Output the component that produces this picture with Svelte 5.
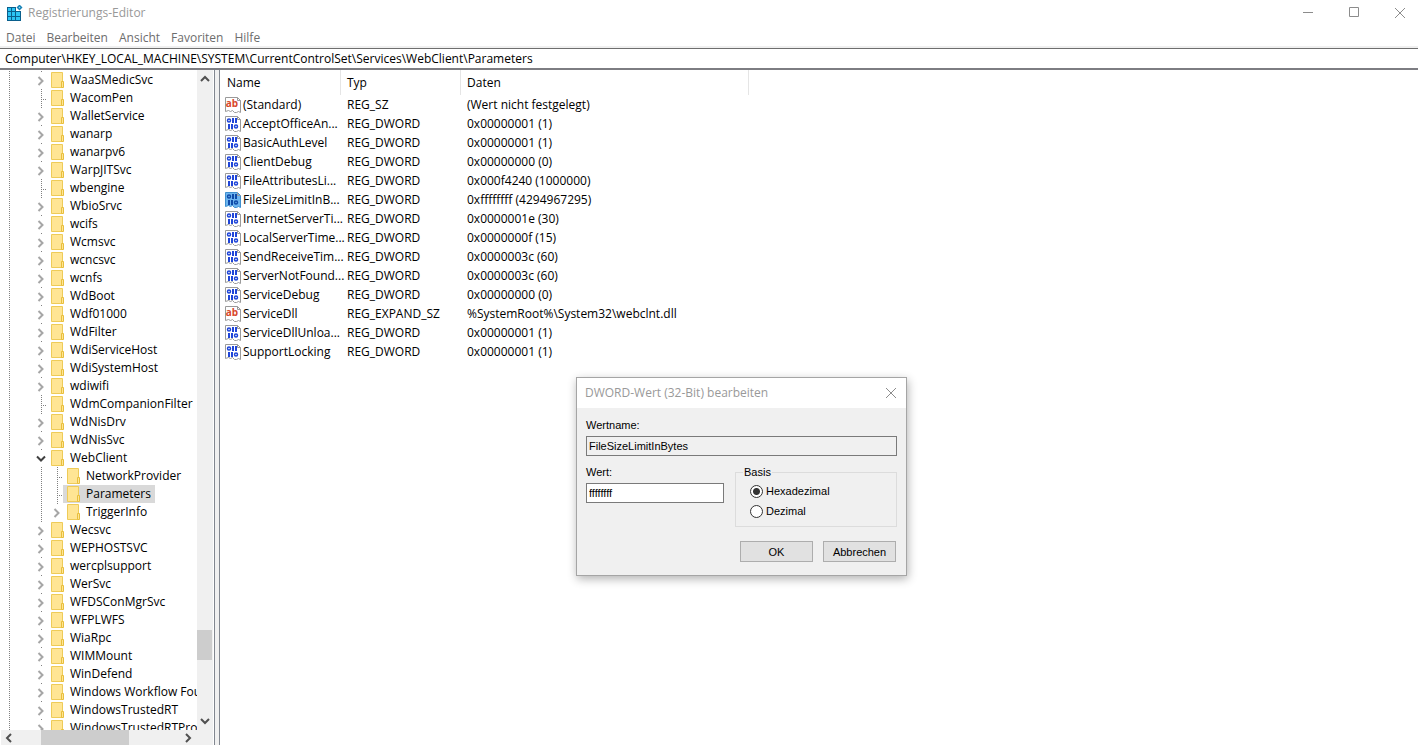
<script lang="ts">
  interface TreeKey {
    name: string;
    depth?: number;
    leaf?: boolean;
    open?: boolean;
  }

  interface RegValue {
    name: string;
    type: string;
    data: string;
  }

  const menu = ["Datei", "Bearbeiten", "Ansicht", "Favoriten", "Hilfe"];

  const keys: TreeKey[] = [
    { name: "WaaSMedicSvc" },
    { name: "WacomPen", leaf: true },
    { name: "WalletService" },
    { name: "wanarp" },
    { name: "wanarpv6" },
    { name: "WarpJITSvc" },
    { name: "wbengine", leaf: true },
    { name: "WbioSrvc" },
    { name: "wcifs" },
    { name: "Wcmsvc" },
    { name: "wcncsvc" },
    { name: "wcnfs" },
    { name: "WdBoot" },
    { name: "Wdf01000" },
    { name: "WdFilter" },
    { name: "WdiServiceHost" },
    { name: "WdiSystemHost" },
    { name: "wdiwifi" },
    { name: "WdmCompanionFilter", leaf: true },
    { name: "WdNisDrv" },
    { name: "WdNisSvc" },
    { name: "WebClient", open: true },
    { name: "NetworkProvider", depth: 1, leaf: true },
    { name: "Parameters", depth: 1, leaf: true },
    { name: "TriggerInfo", depth: 1 },
    { name: "Wecsvc" },
    { name: "WEPHOSTSVC" },
    { name: "wercplsupport" },
    { name: "WerSvc" },
    { name: "WFDSConMgrSvc" },
    { name: "WFPLWFS" },
    { name: "WiaRpc" },
    { name: "WIMMount" },
    { name: "WinDefend" },
    { name: "Windows Workflow Foundation" },
    { name: "WindowsTrustedRT" },
    { name: "WindowsTrustedRTProxy" }
  ];

  const values: RegValue[] = [
    { name: "(Standard)", type: "REG_SZ", data: "(Wert nicht festgelegt)" },
    { name: "AcceptOfficeAn...", type: "REG_DWORD", data: "0x00000001 (1)" },
    { name: "BasicAuthLevel", type: "REG_DWORD", data: "0x00000001 (1)" },
    { name: "ClientDebug", type: "REG_DWORD", data: "0x00000000 (0)" },
    { name: "FileAttributesLi...", type: "REG_DWORD", data: "0x000f4240 (1000000)" },
    { name: "FileSizeLimitInB...", type: "REG_DWORD", data: "0xffffffff (4294967295)" },
    { name: "InternetServerTi...", type: "REG_DWORD", data: "0x0000001e (30)" },
    { name: "LocalServerTime...", type: "REG_DWORD", data: "0x0000000f (15)" },
    { name: "SendReceiveTim...", type: "REG_DWORD", data: "0x0000003c (60)" },
    { name: "ServerNotFound...", type: "REG_DWORD", data: "0x0000003c (60)" },
    { name: "ServiceDebug", type: "REG_DWORD", data: "0x00000000 (0)" },
    { name: "ServiceDll", type: "REG_EXPAND_SZ", data: "%SystemRoot%\\System32\\webclnt.dll" },
    { name: "ServiceDllUnloa...", type: "REG_DWORD", data: "0x00000001 (1)" },
    { name: "SupportLocking", type: "REG_DWORD", data: "0x00000001 (1)" }
  ];

  let selectedKey = $state("Parameters");
  let selectedValue = $state("FileSizeLimitInB...");
  let path = $state("Computer\\HKEY_LOCAL_MACHINE\\SYSTEM\\CurrentControlSet\\Services\\WebClient\\Parameters");
  let dialogOpen = $state(true);
  let value = $state("ffffffff");
  let base = $state("hex");
</script>

{#snippet arrow(d: string)}
  <svg width="16" height="16" viewBox="0 0 16 16" aria-hidden="true">
    <path {d} fill="none" stroke="#505050" stroke-width="2" />
  </svg>
{/snippet}

{#snippet cross()}
  <svg width="12" height="12" viewBox="0 0 12 12" aria-hidden="true">
    <path d="M1 1l10 10M11 1L1 11" fill="none" stroke="#8c8c8c" />
  </svg>
{/snippet}

<div class="window">
  <header class="titlebar">
    <svg width="17" height="17" viewBox="0 0 17 17" aria-hidden="true">
      <path d="M1 2h9v4h5v10H1z" fill="#0a5f8c" />
      <path d="M2 3h3v3H2zM6 3h3v3H6zM2 7h3v4H2zM6 7h3v4H6zM10 7h4v4h-4zM2 12h3v3H2zM6 12h3v3H6zM10 12h4v3h-4z" fill="#2cc4f4" />
      <path d="M13.500-.5l3 3-3 3-3-3z" fill="#1580b4" />
      <path d="M13.500 1.500l1 1-1 1-1-1z" fill="#8fe0fb" />
    </svg>
    <h1>Registrierungs-Editor</h1>
    <div class="caption-buttons">
      <button aria-label="Minimieren">
        <svg width="12" height="12" viewBox="0 0 12 12"><path d="M1 5.500h10" stroke="#8c8c8c" /></svg>
      </button>
      <button aria-label="Maximieren">
        <svg width="12" height="12" viewBox="0 0 12 12"><path d="M1.500.5h9v9h-9z" fill="none" stroke="#8c8c8c" /></svg>
      </button>
      <button aria-label="Schließen">{@render cross()}</button>
    </div>
  </header>

  <nav class="menubar">
    {#each menu as item}
      <button>{item}</button>
    {/each}
  </nav>

  <input class="address" aria-label="Pfad" bind:value={path} spellcheck="false" />

  <main class="panes">
    <section class="tree-pane">
      <ul class="tree">
        {#each keys as key (key.name)}
          <li>
            <span class="cell dotted"></span>
            <span class="cell"></span>
            {#if key.depth}
              <span class="cell dotted"></span>
            {/if}
            <span class="toggle" class:dotted={key.leaf} class:leaf={key.leaf}>
              {#if !key.leaf}
                <svg width="14" height="18" viewBox="0 0 14 18" aria-hidden="true">
                  <path d="M8 0h1v1h-1z" fill="#808080" />
                  {#if key.open}
                    <path d="M4 7.500l4 4 4-4" fill="none" stroke="#404040" stroke-width="2" />
                  {:else}
                    <path d="M5.500 6l4 4-4 4" fill="none" stroke="#a6a6a6" stroke-width="2" />
                  {/if}
                </svg>
              {/if}
            </span>
            <button class="key" class:selected={key.name === selectedKey} onclick={() => (selectedKey = key.name)}>
              <svg width="16" height="18" viewBox="0 0 16 18" aria-hidden="true">
                <path d="M.5 1.500h11v15H.5z" fill="#ffe594" stroke="#eecb58" />
                <path d="M10.500 10.500h2v6h-2z" fill="#ffe594" stroke="#e8bf3d" />
              </svg>
              {key.name}
            </button>
          </li>
        {/each}
      </ul>
      <div class="vscroll">
        <button aria-label="Nach oben">{@render arrow("M4 11l4-4 4 4")}</button>
        <span class="thumb"></span>
        <button aria-label="Nach unten">{@render arrow("M4 5l4 4 4-4")}</button>
      </div>
      <div class="hscroll">
        <button aria-label="Nach links">{@render arrow("M10 4L6 8l4 4")}</button>
        <span class="thumb"></span>
        <button aria-label="Nach rechts">{@render arrow("M6 4l4 4-4 4")}</button>
      </div>
    </section>

    <section class="value-pane">
      <table>
        <thead>
          <tr><th>Name</th><th>Typ</th><th>Daten</th></tr>
        </thead>
        <tbody>
          {#each values as row (row.name)}
            <tr onclick={() => (selectedValue = row.name)}>
              <td>
                <div class="name" class:selected={row.name === selectedValue}>
                  <svg width="16" height="16" viewBox="0 0 16 16" aria-hidden="true">
                    <path
                      class="sheet"
                      d="M.5.5h12l3 3v12l-2-1-2 1h-2l-2-2-2 1-2-1-3 1z"
                    />
                    <path class="fold" d="M12.500.5v3h3" />
                    {#if row.type === "REG_DWORD"}
                      <g class="bits">
                        <circle cx="4" cy="4.500" r="1.500" />
                        <rect x="7" y="2" width="2" height="5" />
                        <rect x="10" y="2" width="2" height="5" />
                        <rect x="3" y="8" width="2" height="5" />
                        <rect x="6" y="8" width="2" height="5" />
                        <circle cx="11" cy="10.500" r="1.500" />
                      </g>
                    {:else}
                      <text class="letters" x="7" y="10">ab</text>
                    {/if}
                  </svg>
                  {row.name}
                </div>
              </td>
              <td>{row.type}</td>
              <td>{row.data}</td>
            </tr>
          {/each}
        </tbody>
      </table>
    </section>
  </main>

  {#if dialogOpen}
    <div class="dialog" role="dialog" aria-labelledby="dialog-title">
      <header>
        <h2 id="dialog-title">DWORD-Wert (32-Bit) bearbeiten</h2>
        <button aria-label="Schließen" onclick={() => (dialogOpen = false)}>{@render cross()}</button>
      </header>
      <form onsubmit={(e) => e.preventDefault()}>
        <label for="value-name">Wertname:</label>
        <input id="value-name" type="text" value="FileSizeLimitInBytes" readonly />
        <div class="columns">
          <div class="data">
            <label for="value-data">Wert:</label>
            <input id="value-data" type="text" bind:value spellcheck="false" />
          </div>
          <fieldset>
            <legend>Basis</legend>
            <label><input type="radio" name="base" value="hex" bind:group={base} />Hexadezimal</label>
            <label><input type="radio" name="base" value="dec" bind:group={base} />Dezimal</label>
          </fieldset>
        </div>
        <div class="actions">
          <button type="submit">OK</button>
          <button type="button" onclick={() => (dialogOpen = false)}>Abbrechen</button>
        </div>
      </form>
    </div>
  {/if}
</div>

<style>
  :global(body) {
    margin: 0;
    background: #fff;
  }

  .window {
    display: flex;
    flex-direction: column;
    height: 100vh;
    overflow: hidden;
    font-family: "Segoe UI", "Open Sans", "Noto Sans", sans-serif;
    font-size: 12px;
    line-height: 18px;
    color: #000;
  }

  .window * {
    box-sizing: border-box;
  }

  svg {
    display: block;
    flex: none;
  }

  button,
  input {
    margin: 0;
    padding: 0;
    border: 0;
    background: none;
    color: inherit;
    font: inherit;
  }

  h1,
  h2 {
    margin: 0;
    font-size: 12px;
    font-weight: 400;
    color: #999;
  }

  /* Title bar and menu */
  .titlebar {
    display: flex;
    align-items: center;
    gap: 5px;
    flex: none;
    height: 26px;
    padding: 0 12px 0 6px;
  }

  .caption-buttons {
    display: flex;
    gap: 34px;
    height: 24px;
    margin-left: auto;
  }

  .menubar {
    display: flex;
    gap: 11px;
    flex: none;
    height: 22px;
    padding: 3px 6px 0;
    border-bottom: 2px solid #f0f0f0;
    color: #6d6d6d;
  }

  .menubar button {
    height: 18px;
  }

  .address {
    flex: none;
    height: 22px;
    padding: 0 5px;
    border-top: 1px solid #6e6e6e;
    border-bottom: 2px solid #7d7d82;
    outline: none;
  }

  .panes {
    display: flex;
    flex: 1;
    min-height: 0;
  }

  /* Key tree */
  .tree-pane {
    display: grid;
    grid-template: minmax(0, 1fr) 15px / minmax(0, 1fr) 16px;
    flex: none;
    width: 215px;
    padding: 0 1px;
    border-right: 1px solid #828790;
  }

  .tree {
    margin: 0;
    padding: 1px 0 0;
    overflow: hidden;
    list-style: none;
  }

  .tree li {
    display: flex;
    height: 18px;
  }

  .cell {
    flex: none;
    width: 16px;
  }

  .toggle {
    flex: none;
    width: 14px;
  }

  .dotted {
    background: repeating-linear-gradient(#808080 0 1px, transparent 1px 2px) 8px 0 / 1px 100% no-repeat;
  }

  .leaf {
    background:
      repeating-linear-gradient(#808080 0 1px, transparent 1px 2px) 8px 0 / 1px 100% no-repeat,
      repeating-linear-gradient(90deg, #808080 0 1px, transparent 1px 2px) 8px 10px / 6px 1px no-repeat;
  }

  .key {
    display: flex;
    gap: 3px;
    padding: 0 4px;
    white-space: nowrap;
  }

  .key.selected {
    background: #d9d9d9;
  }

  .vscroll,
  .hscroll {
    display: flex;
    justify-content: space-between;
    background: #f0f0f0;
  }

  .vscroll {
    flex-direction: column;
  }

  .vscroll .thumb {
    width: 15px;
    height: 30px;
    margin: auto 0 54px;
    background: #cdcdcd;
  }

  .hscroll {
    grid-column: 1 / -1;
    padding-right: 17px;
  }

  .hscroll .thumb {
    width: 88px;
    margin: 0 auto 0 24px;
    background: #cdcdcd;
  }

  /* Value list */
  .value-pane {
    flex: 1;
    min-width: 0;
    padding-left: 1px;
    border-left: 4px solid #f0f0f0;
    box-shadow: inset 1px 0 #828790;
    overflow: hidden;
  }

  table {
    width: 529px;
    table-layout: fixed;
    border-collapse: separate;
    border-spacing: 0;
    padding-left: 1px;
  }

  th {
    height: 25px;
    padding: 0 0 0 6px;
    border-right: 1px solid #e5e5e5;
    font-weight: 400;
    text-align: left;
  }

  th:nth-child(-n + 2) {
    width: 120px;
  }

  td {
    height: 19px;
    padding: 0 0 0 6px;
    white-space: nowrap;
  }

  td:first-child {
    padding-left: 4px;
  }

  .name {
    display: flex;
    align-items: center;
    gap: 2px;
  }

  .sheet {
    fill: #fff;
    stroke: #9a9a9a;
  }

  .fold {
    fill: none;
    stroke: #9a9a9a;
  }

  .bits {
    fill: #1f45d8;
  }

  .bits circle {
    fill: none;
    stroke: #1f45d8;
    stroke-width: 1.5;
  }

  .letters {
    font-family: "Open Sans", sans-serif;
    font-size: 10px;
    font-weight: 700;
    text-anchor: middle;
    fill: #d8472b;
  }

  .selected .sheet {
    fill: #6db5ef;
    stroke: #3f8fce;
  }

  .selected .bits {
    fill: #0f4ba8;
  }

  .selected .bits circle {
    stroke: #0f4ba8;
  }

  /* Edit dialog */
  .dialog {
    position: absolute;
    top: 377px;
    left: 576px;
    width: 331px;
    border: 1px solid #a5a5a5;
    background: #f0f0f0;
    box-shadow: 1px 3px 9px rgba(0, 0, 0, 0.3);
  }

  .dialog header {
    display: flex;
    align-items: center;
    justify-content: space-between;
    height: 30px;
    padding: 0 9px 0 8px;
    background: #fff;
  }

  .dialog form {
    display: flex;
    flex-direction: column;
    padding: 8px 9px 13px;
    font-family: "Liberation Sans", Arial, sans-serif;
    font-size: 11px;
  }

  .dialog input[type="text"] {
    width: 100%;
    height: 20px;
    margin-top: 2px;
    padding: 0 2px;
    border: 1px solid #7a7a7a;
    background: #fff;
    outline: none;
  }

  .dialog input[readonly] {
    background: #f0f0f0;
  }

  .columns {
    display: flex;
    gap: 11px;
    padding-top: 7px;
  }

  .data {
    flex: 1;
  }

  .data label {
    display: block;
  }

  fieldset {
    width: 162px;
    height: 64px;
    margin: 0;
    padding: 0 14px;
    border: 1px solid #dcdcdc;
  }

  legend {
    margin-left: -7px;
    padding: 0 1px;
  }

  fieldset label {
    display: flex;
    align-items: center;
    gap: 3px;
    height: 20px;
  }

  input[type="radio"] {
    appearance: none;
    width: 13px;
    height: 13px;
    border: 1px solid #333;
    border-radius: 50%;
    background: #fff;
  }

  input[type="radio"]:checked {
    background: radial-gradient(circle, #333 0 3px, #fff 4px);
  }

  .actions {
    display: flex;
    justify-content: flex-end;
    gap: 10px;
    padding: 14px 1px 0 0;
  }

  .actions button {
    width: 73px;
    height: 21px;
    border: 1px solid #adadad;
    background: #e1e1e1;
  }
</style>
